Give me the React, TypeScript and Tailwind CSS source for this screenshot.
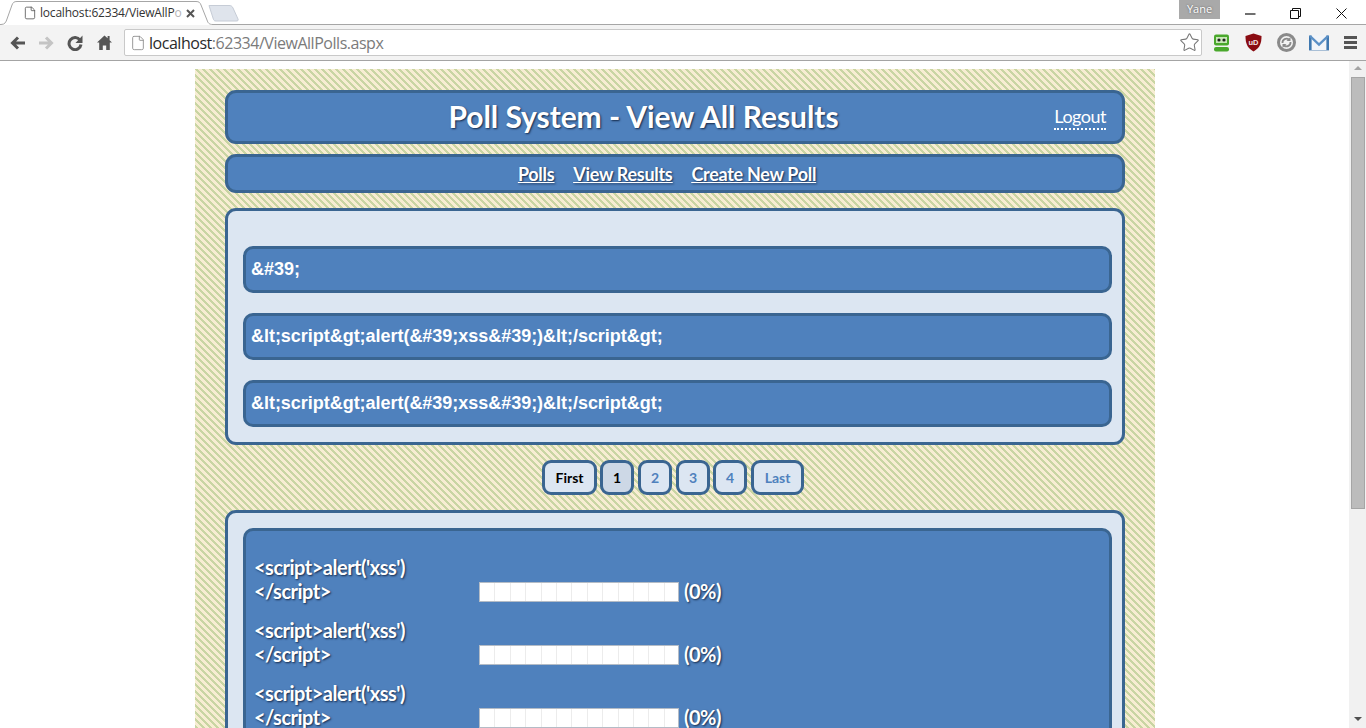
import React from "react";
import { File, Star } from "lucide-react";

const Body = "font-['Lato','Carlito',sans-serif]";
const shadow = "[text-shadow:1px_1px_2px_#14294a]";

function Back({ color }: { color: string }) {
  return (
    <svg width="16" height="14" viewBox="0 0 16 14" fill="none">
      <path d="M15 7H3M8 1.5 2.5 7 8 12.5" stroke={color} strokeWidth="3" />
    </svg>
  );
}

function Toolbar() {
  return (
    <div className="h-[36px] bg-[#f3f3f3] border-b border-[#a4a4a4] flex items-center relative">
      <div className="flex items-center w-[124px] shrink-0 pl-[10px]">
        <Back color="#555555" />
        <div className="ml-[12px]">
          <svg width="16" height="14" viewBox="0 0 16 14" fill="none" className="-scale-x-100">
            <path d="M15 7H3M8 1.5 2.5 7 8 12.5" stroke="#c4c4c4" strokeWidth="3" />
          </svg>
        </div>
        <svg className="ml-[13px]" width="16" height="16" viewBox="0 0 16 16" fill="none">
          <path d="M13 5.2A6 6 0 1 0 14 9.5" stroke="#555" strokeWidth="3" />
          <path d="M15.5 0.5V8H8.5Z" fill="#555" />
        </svg>
        <svg className="ml-[14px]" width="15" height="15" viewBox="0 0 15 15">
          <path d="M7.5 0.5 0 7.5h2.2V15h3.6v-4.6h3.4V15h3.6V7.5H15L12.6 5.2V1h-2v2.3Z" fill="#555" />
        </svg>
      </div>
      <div className="w-[1078px] h-[27px] bg-white border border-[#c9c9c9] rounded-[2px] flex items-center pl-[5px] shrink-0">
        <File size={16} strokeWidth={1.3} color="#8a8a8a" />
        <span className="ml-[3px] text-[16px] text-[#7b7b7b] font-['Open_Sans',sans-serif] tracking-[-0.47px]">
          <span className="text-[#2a2a2a]">localhost</span>:62334/ViewAllPolls.aspx
        </span>
        <Star size={21} strokeWidth={1.2} color="#777" className="ml-auto mr-[1px]" />
      </div>
      <div className="flex items-center ml-[11px] gap-[15px]">
        <svg width="17" height="18" viewBox="0 0 17 18">
          <rect x="1" y="0.5" width="15" height="11" rx="2" fill="#4aa82c" />
          <rect x="3" y="3" width="11" height="6" fill="#c9e8b8" />
          <circle cx="6" cy="6" r="1.6" fill="#222" />
          <circle cx="11" cy="6" r="1.6" fill="#222" />
          <rect x="1" y="13" width="15" height="4.5" rx="2" fill="#4aa82c" />
        </svg>
        <svg width="17" height="19" viewBox="0 0 17 19">
          <path d="M8.5 0.5 16.5 3c0 7 -1.5 12 -8 15.5C2 15 .5 10 .5 3Z" fill="#8a0c12" />
          <text x="8.5" y="11.5" fontSize="7.5" fontWeight="700" textAnchor="middle" fill="#f3e6e6" fontFamily="Liberation Sans, sans-serif">uD</text>
        </svg>
        <svg width="19" height="19" viewBox="0 0 19 19" fill="none">
          <circle cx="9.5" cy="9.5" r="8" stroke="#8a8a8a" strokeWidth="3" />
          <path d="M5.5 10a4 4 0 0 1 6.5-3.5M13.5 9a4 4 0 0 1-6.5 3.5" stroke="#8a8a8a" strokeWidth="1.8" />
          <path d="M13.5 4v4h-4ZM5.5 15v-4h4Z" fill="#8a8a8a" />
        </svg>
        <svg className="-ml-[2px]" width="20" height="16" viewBox="0 0 20 16">
          <rect x="0.5" y="0.5" width="19" height="15" fill="#f2f5f9" />
          <path d="M0 0.5h2.6v15H0ZM17.4 0.5H20v15h-2.6Z" fill="#3f78b0" />
          <path d="M1 1 10 9.5 19 1" fill="none" stroke="#5b90c6" strokeWidth="2.4" />
          <path d="M0 15.5H20" stroke="#a9bfd6" />
        </svg>
        <div className="flex flex-col gap-[2px]">
          <div className="w-[13px] h-[3px] bg-[#555]" />
          <div className="w-[13px] h-[3px] bg-[#555]" />
          <div className="w-[13px] h-[3px] bg-[#555]" />
        </div>
      </div>
    </div>
  );
}

function TabStrip() {
  return (
    <div className="h-[25px] bg-white relative flex items-start font-['Open_Sans',sans-serif]">
      <svg className="absolute left-0 top-0" width="245" height="25" viewBox="0 0 245 25" fill="none">
        <path d="M0 24.5H1C5 24.5 6 22 7 19L12 5C13 2.5 14 1.5 17 1.5H196C199 1.5 200 2.5 201 5L207 20C208 23 209 24.5 213 24.5H245" stroke="#a6a6a6" fill="#ffffff" />
        <path d="M209 5.5H229C231 5.5 232 6 233 8L238 19C238.5 20.5 238 21 236 21H216C214.5 21 214 20.5 213.5 19.5Z" fill="#dfe4ec" stroke="#c6ccd6" />
      </svg>
      <div className="absolute left-[245px] right-0 top-[24px] h-px bg-[#a6a6a6]" />
      <div className="relative ml-[23px] mt-[6px] flex items-center h-[14px]">
        <File size={14} strokeWidth={1.4} color="#555" />
        <span className="ml-[3px] text-[12px] text-[#333] w-[140px] whitespace-nowrap tracking-[-0.2px]">
          localhost:62334/ViewAllP<span className="text-[#b5b5b5]">o</span>
        </span>
        <svg className="ml-[6px]" width="9" height="9" viewBox="0 0 9 9"><path d="M1 1l7 7M8 1 1 8" stroke="#555" strokeWidth="2" /></svg>
      </div>
      <div className="relative ml-auto flex items-start">
        <div className="w-[41px] h-[19px] bg-[#a9a9a9] text-white text-[11px] leading-[17px] text-center [text-shadow:0_0_2px_#555]">Yane</div>
        <div className="w-[146px] h-[19px] flex items-center pt-[8px] pl-[25px]">
          <svg width="11" height="11" viewBox="0 0 11 11"><path d="M0 6h10.5" stroke="#111" strokeWidth="1.2" /></svg>
          <svg className="ml-[34px]" width="11" height="11" viewBox="0 0 11 11" fill="none"><path d="M.5 2.5h8v8h-8ZM2.5 2.5v-2h8v8h-2" stroke="#111" /></svg>
          <svg className="ml-[35px]" width="11" height="11" viewBox="0 0 11 11"><path d="M.5.5l10 10M10.5.5l-10 10" stroke="#111" /></svg>
        </div>
      </div>
    </div>
  );
}

function ResultRow() {
  return (
    <div className="flex items-end mb-[19px]">
      <div className={`w-[225px] flex flex-col gap-[4px] text-[20px] leading-[20px] font-bold text-white tracking-[-0.5px] ${shadow}`}>
        <span>&lt;script&gt;alert('xss')</span>
        <span>&lt;/script&gt;</span>
      </div>
      <div className="w-[200px] h-[20px] -mb-px border border-[#b4bcc6] bg-[repeating-linear-gradient(90deg,#ffffff_0,#ffffff_14.4px,#ececec_14.4px,#ececec_15.4px)]" />
      <span className={`ml-[5px] text-[20px] leading-[20px] font-bold text-white tracking-[-0.5px] ${shadow}`}>(0%)</span>
    </div>
  );
}

function PageBtn({ label, current, muted, w }: { label: string; current?: boolean; muted?: boolean; w: string }) {
  return (
    <div
      className={`${w} h-[35px] border-[3px] border-[#3a6591] rounded-[9px] flex items-center justify-center text-[14px] font-bold ${current ? "bg-[#cdd8e6]" : "bg-[#dce6f2]"} ${muted ? "text-[#4f81bd]" : "text-black"}`}
    >
      {label}
    </div>
  );
}

const items = ["&#39;", "&lt;script&gt;alert(&#39;xss&#39;)&lt;/script&gt;", "&lt;script&gt;alert(&#39;xss&#39;)&lt;/script&gt;"];

export default function App() {
  return (
    <div className="w-[1366px] h-[728px] overflow-hidden flex flex-col bg-white">
      <TabStrip />
      <Toolbar />
      <div className="flex flex-1 min-h-0">
        <main className="flex-1 min-w-0 overflow-hidden pt-[8px] pl-[195px]">
          <div className={`w-[960px] h-[700px] px-[30px] pt-[21px] ${Body} bg-[linear-gradient(45deg,#c9d5a3_15%,#f7edd2_15%,#f7edd2_50%,#c9d5a3_50%,#c9d5a3_65%,#f7edd2_65%)] bg-[length:7px_7px]`}>
            <header className="h-[54px] border-[3px] border-[#3a6591] rounded-[11px] bg-[#4f81bd] relative flex items-center justify-center pr-[63px] pb-[2px]">
              <h1 className={`text-[30px] font-bold text-white tracking-[-0.05px] ${shadow}`}>Poll System - View All Results</h1>
              <a className="absolute right-[16px] top-[11px] text-[18px] leading-[24px] text-white border-b-2 border-dotted border-white tracking-[-0.5px]">Logout</a>
            </header>
            <nav className={`mt-[10px] h-[39px] border-[3px] border-[#3a6591] rounded-[11px] bg-[#4f81bd] flex items-center justify-center gap-[19px] pr-[16px] pt-[1px] text-[18px] font-bold text-white underline tracking-[-0.3px] ${shadow}`}>
              <a>Polls</a>
              <a>View Results</a>
              <a>Create New Poll</a>
            </nav>
            <section className="mt-[15px] h-[237px] border-[3px] border-[#3a6591] rounded-[11px] bg-[#dce6f2] pt-[35px] px-[15px] flex flex-col gap-[20px]">
              {items.map((t, i) => (
                <div key={i} className="h-[47px] w-[869px] border-[3px] border-[#3a6591] rounded-[10px] bg-[#4f81bd] flex items-center pl-[5px] font-['Liberation_Sans',sans-serif] text-[18px] font-bold text-white tracking-[-0.03px]">
                  {t}
                </div>
              ))}
            </section>
            <div className="mt-[15px] flex justify-center pr-[4px]">
              <PageBtn label="First" w="w-[55px]" />
              <div className="ml-[3px]"><PageBtn label="1" current w="w-[34px]" /></div>
              <div className="ml-[4px]"><PageBtn label="2" muted w="w-[34px]" /></div>
              <div className="ml-[4px]"><PageBtn label="3" muted w="w-[34px]" /></div>
              <div className="ml-[3px]"><PageBtn label="4" muted w="w-[34px]" /></div>
              <div className="ml-[4px]"><PageBtn label="Last" muted w="w-[53px]" /></div>
            </div>
            <section className="mt-[15px] border-[3px] border-[#3a6591] rounded-[11px] bg-[#dce6f2] pt-[15px] px-[15px] h-[400px]">
              <div className="w-[869px] h-[380px] border-[3px] border-[#3a6591] rounded-[10px] bg-[#4f81bd] pl-[8px] pt-[26px]">
                <ResultRow />
                <ResultRow />
                <ResultRow />
              </div>
            </section>
          </div>
        </main>
        <aside className="w-[17px] shrink-0 bg-[#f1f1f1] flex flex-col items-center pt-[5px] px-[2px]">
          <div className="w-0 h-0 border-x-[4px] border-x-transparent border-b-[4px] border-b-[#a3a3a3]" />
          <div className="mt-[7px] w-[14px] h-[432px] bg-[#bcbcbc] border border-[#a5a5a5]" />
          <div className="mt-auto mb-[7px] w-0 h-0 border-x-[4px] border-x-transparent border-t-[4px] border-t-[#505050]" />
        </aside>
      </div>
    </div>
  );
}
